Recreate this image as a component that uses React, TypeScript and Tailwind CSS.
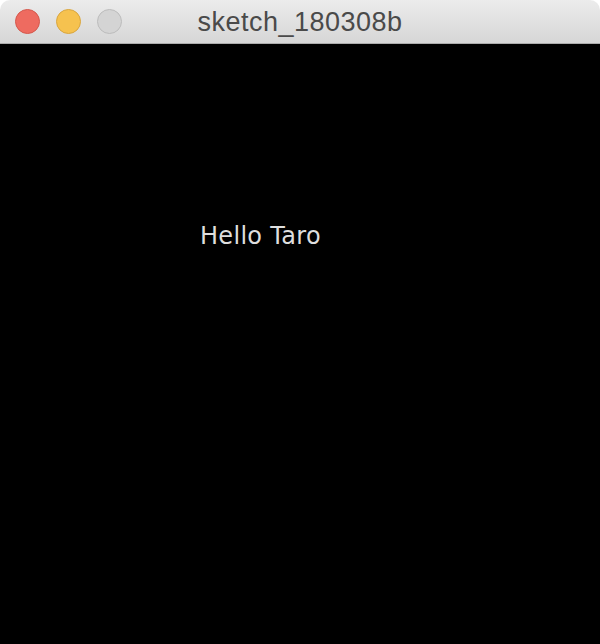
export default function App() {
  return (
    <div className="w-[600px] h-[644px] bg-white flex flex-col overflow-hidden">
      <div className="h-[44px] shrink-0 rounded-t-[10px] bg-gradient-to-b from-[#ececec] to-[#d6d6d6] border-b border-[#acacac] grid grid-cols-[1fr_auto_1fr] items-center">
        <div className="flex items-center gap-[16px] pl-[15px]">
          <div className="w-[25px] h-[25px] rounded-full bg-[#ee6b60] border border-[#d5584c]" />
          <div className="w-[25px] h-[25px] rounded-full bg-[#f6c24f] border border-[#d9a63f]" />
          <div className="w-[25px] h-[25px] rounded-full bg-[#d4d4d4] border border-[#bcbcbc]" />
        </div>
        <div className="text-[27px] leading-none tracking-[0.5px] text-[#4a4a4a] font-['Liberation_Sans',Arial,sans-serif] pt-[1px]">
          sketch_180308b
        </div>
        <div />
      </div>
      <div className="flex-1 bg-black pl-[200px] pt-[180px]">
        <div className="text-[24px] leading-[24px] tracking-[0.3px] text-[#dedede] font-['DejaVu_Sans',sans-serif]">
          Hello Taro
        </div>
      </div>
    </div>
  );
}
